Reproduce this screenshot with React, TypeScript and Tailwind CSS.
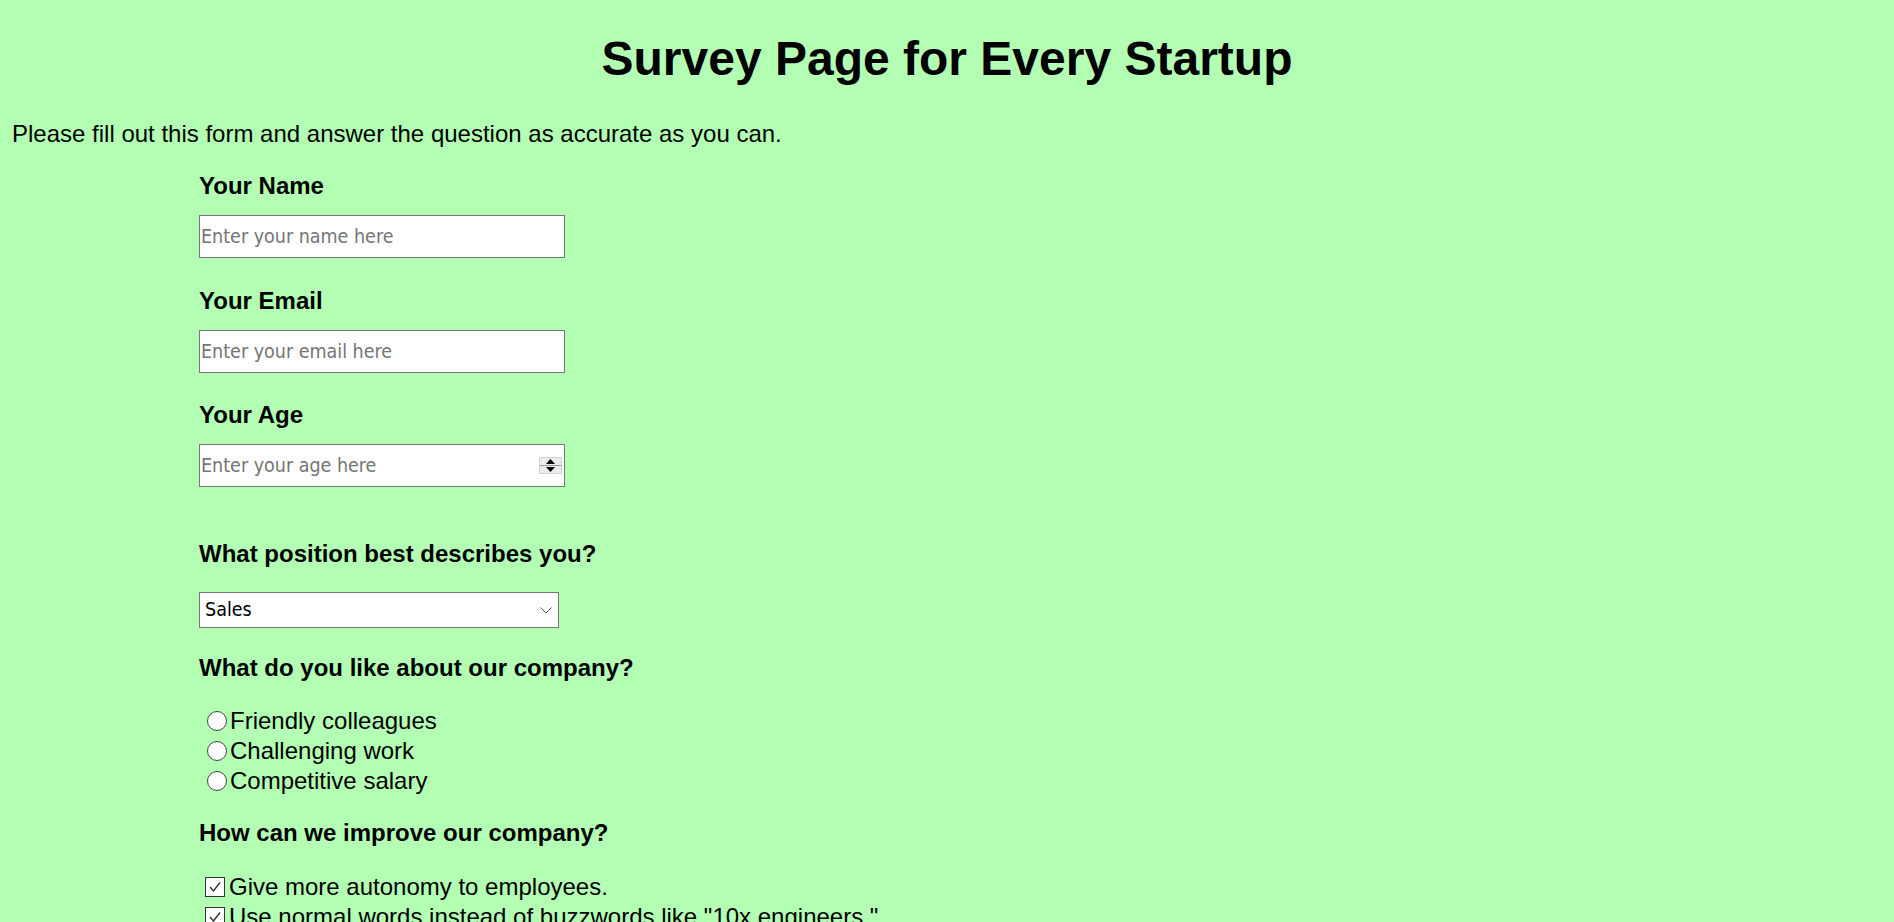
import React from 'react';

const textFont = "font-['Liberation_Sans',Arial,sans-serif]";
const fieldFont = "font-['DejaVu_Sans_Condensed','DejaVu_Sans',sans-serif]";

function Label({ children, className = '' }: { children: React.ReactNode; className?: string }) {
    return <h3 className={`text-[24px] font-bold leading-[28px] text-black ${className}`}>{children}</h3>;
}

function TextField({ placeholder, className = '', spinner = false }: { placeholder: string; className?: string; spinner?: boolean }) {
    return (
        <div className={`relative w-[366px] ${className}`}>
            <input
                type="text"
                placeholder={placeholder}
                className={`block h-[43px] w-full border border-[#767676] bg-white px-[1px] text-[19.5px] text-black outline-none placeholder:text-[#757575] ${fieldFont}`}
            />
            {spinner && (
                <svg className="absolute right-[3px] top-[13px]" width="23" height="17" viewBox="0 0 23 17">
                    <rect x="0.5" y="0.5" width="22" height="16" fill="#ececec" stroke="#d2d2d2" />
                    <line x1="1" y1="8.5" x2="22" y2="8.5" stroke="#9a9a9a" />
                    <polygon points="7,7 16,7 11.5,2" fill="#000" />
                    <polygon points="7,10 16,10 11.5,15" fill="#000" />
                </svg>
            )}
        </div>
    );
}

function Radio({ label }: { label: string }) {
    return (
        <label className="flex h-[30px] items-center text-[24px] leading-[30px]">
            <span className="ml-[8px] mr-[3px] h-[20px] w-[20px] rounded-full border border-[#444] bg-white"></span>
            {label}
        </label>
    );
}

function Check({ label }: { label: string }) {
    return (
        <label className="flex h-[30px] items-center text-[24px] leading-[30px] whitespace-nowrap">
            <span className="ml-[6px] mr-[4px] flex h-[20px] w-[20px] items-center justify-center border border-[#333] bg-white">
                <svg width="16" height="16" viewBox="0 0 16 16">
                    <polyline points="3,8 6.5,12 13,3.5" fill="none" stroke="#333" strokeWidth="1.4" />
                </svg>
            </span>
            {label}
        </label>
    );
}

export default function App() {
    return (
        <div className={`h-screen overflow-hidden bg-[#b3ffb3] px-[12px] pt-[31px] text-black ${textFont}`}>
            <h1 className="text-center text-[48px] font-bold leading-[56px]">Survey Page for Every Startup</h1>
            <p className="mt-[33px] text-[24px] leading-[28px]">
                Please fill out this form and answer the question as accurate as you can.
            </p>

            <form className="ml-[187px]">
                <Label className="mt-[24px]">Your Name</Label>
                <TextField className="mt-[15px]" placeholder="Enter your name here" />

                <Label className="mt-[29px]">Your Email</Label>
                <TextField className="mt-[15px]" placeholder="Enter your email here" />

                <Label className="mt-[28px]">Your Age</Label>
                <TextField className="mt-[15px]" placeholder="Enter your age here" spinner />

                <Label className="mt-[53px]">What position best describes you?</Label>
                <div className="relative mt-[24px] w-[360px]">
                    <select
                        defaultValue="sales"
                        className={`block h-[36px] w-full appearance-none border border-[#767676] bg-white pl-[5px] text-[19.5px] text-black outline-none ${fieldFont}`}
                    >
                        <option value="sales">Sales</option>
                        <option value="engineering">Engineering</option>
                        <option value="marketing">Marketing</option>
                        <option value="other">Other</option>
                    </select>
                    <svg className="pointer-events-none absolute left-[341px] top-[15px]" width="12" height="7" viewBox="0 0 12 7">
                        <polyline points="0.5,0.5 6,6 11.5,0.5" fill="none" stroke="#555" strokeWidth="1" />
                    </svg>
                </div>

                <Label className="mt-[26px]">What do you like about our company?</Label>
                <div className="mt-[24px]">
                    <Radio label="Friendly colleagues" />
                    <Radio label="Challenging work" />
                    <Radio label="Competitive salary" />
                </div>

                <Label className="mt-[23px]">How can we improve our company?</Label>
                <div className="mt-[25px]">
                    <Check label="Give more autonomy to employees." />
                    <Check label={'Use normal words instead of buzzwords like "10x engineers."'} />
                </div>
            </form>
        </div>
    );
}
